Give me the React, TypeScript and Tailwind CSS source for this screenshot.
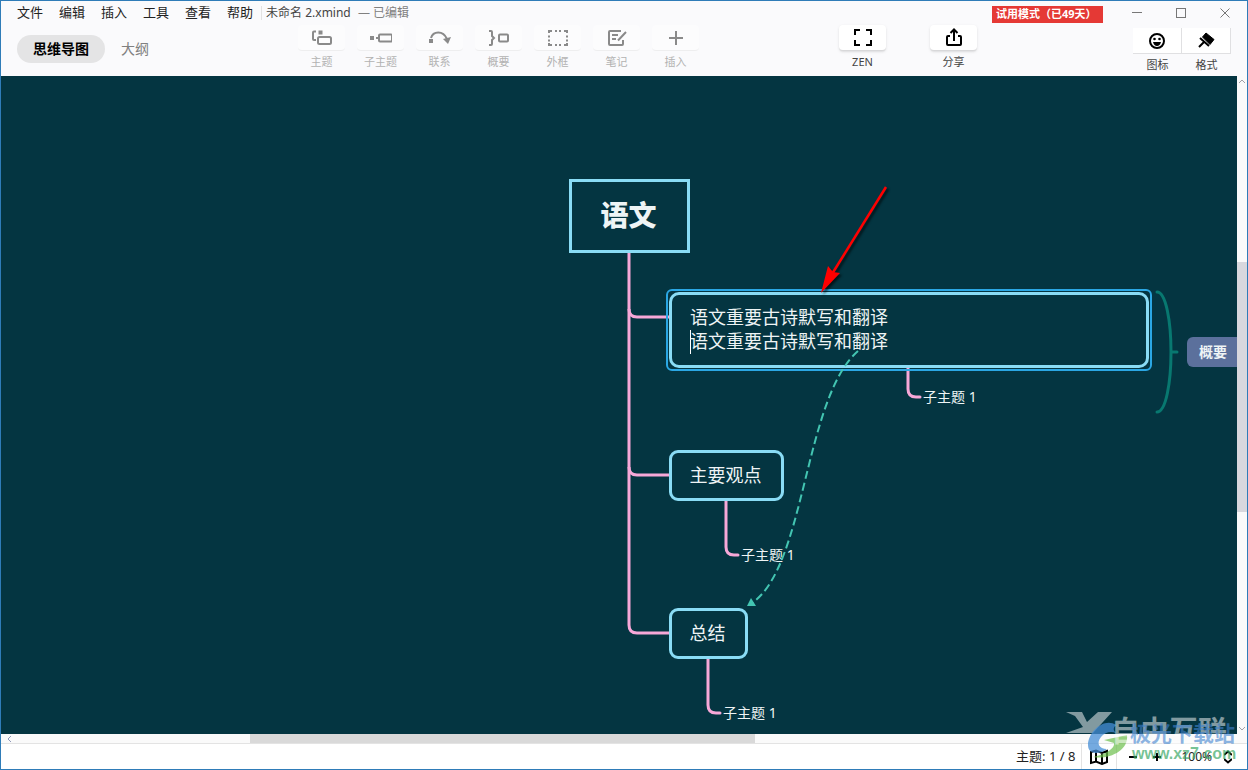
import { useState, type ReactNode } from 'react';

const menus = ['文件', '编辑', '插入', '工具', '查看', '帮助'];

interface Tool {
  label: string;
  icon: ReactNode;
}

const tools: Tool[] = [
  {
    label: '主题',
    icon: (
      <>
        <path d="M5 4.500H3Q2 4.500 2 5.500V12Q2 13 3 13H5" />
        <rect x="7" y="10" width="13" height="7" rx="1.5" />
        <rect x="7.500" y="3.500" width="4" height="4" fill="currentColor" stroke="none" />
      </>
    ),
  },
  {
    label: '子主题',
    icon: (
      <>
        <rect x="0" y="9" width="4" height="4" fill="currentColor" stroke="none" />
        <path d="M6 11H9" />
        <rect x="9" y="7.5" width="13" height="7" rx="1" />
      </>
    ),
  },
  {
    label: '联系',
    icon: (
      <>
        <rect x="0" y="12" width="4" height="4" fill="currentColor" stroke="none" />
        <path d="M2 11C4 4 14 3 18 12" />
        <path d="M14 12L22 10L19 17Z" fill="currentColor" stroke="none" />
      </>
    ),
  },
  {
    label: '概要',
    icon: (
      <>
        <path d="M1 4H3Q4 4 4 5V9L6 11L4 13V17Q4 18 3 18H1" />
        <rect x="11" y="7.5" width="9" height="7" rx="1" />
      </>
    ),
  },
  {
    label: '外框',
    icon: (
      <path d="M2 6V4H5M8 4H10M12 4H14M17 4H20V6M20 8.500V10.500M20 12.500V14.500M20 16V18H17M14 18H12M10 18H8M5 18H2V16M2 14.500V12.500M2 10.500V8.500" />
    ),
  },
  {
    label: '笔记',
    icon: (
      <>
        <path d="M15 4H4Q3 4 3 5V17Q3 18 4 18H16Q17 18 17 17V13" />
        <path d="M6 8H12M6 12H10M20 5L12 13.500" />
      </>
    ),
  },
  { label: '插入', icon: <path d="M11 4V18M4 11H18" /> },
];

function Icon({ children }: { children: ReactNode }) {
  return (
    <svg width="22" height="22" viewBox="0 0 22 22" fill="none" stroke="currentColor" strokeWidth="2" aria-hidden="true">
      {children}
    </svg>
  );
}

function ToolButton({ label, children, dim }: { label: string; children: ReactNode; dim?: boolean }) {
  return (
    <button className={`flex w-[47px] flex-col items-center gap-1 whitespace-nowrap ${dim ? 'text-[#8a8a8a]' : 'text-black'}`}>
      <span
        className={`flex h-[26px] w-full items-center justify-center rounded-sm border-b ${
          dim ? 'border-[#eeeeef] bg-[#fcfcfd]' : 'border-[#d8d8da] bg-white shadow-sm'
        }`}
      >
        {children}
      </span>
      <span className={`text-[11px] leading-[14px] ${dim ? 'text-[#b2b2b2]' : 'text-[#444444]'}`}>{label}</span>
    </button>
  );
}

function SidePanelButton({ label, children }: { label: string; children: ReactNode }) {
  return (
    <button className="flex w-[49px] flex-col items-center gap-1">
      <span className="flex h-[26px] w-full items-center justify-center border-r border-b border-[#e0e0e2] bg-white">
        {children}
      </span>
      <span className="text-[11px] leading-[14px] text-[#444444]">{label}</span>
    </button>
  );
}

function Header() {
  const [tab, setTab] = useState('思维导图');

  return (
    <header className="flex h-[75px] shrink-0 flex-col bg-[#fafafc]">
      <div className="flex h-[23px] items-center">
        <nav className="flex gap-4 pl-4 text-[13px] text-[#222222]">
          {menus.map((m) => (
            <button key={m}>{m}</button>
          ))}
        </nav>
        <div className="ml-2 border-l border-[#e2e2e2] pl-1 text-xs leading-[14px] text-[#444444]">
          未命名 2.xmind <span className="ml-1 text-[#808080]">— 已编辑</span>
        </div>
        <div className="mt-1 mr-3 ml-auto flex h-[17px] w-[111px] items-center bg-[#e53935] text-[11px] font-bold whitespace-nowrap text-white">
          <span className="pl-1">试用模式（已49天）</span>
        </div>
        <div className="flex text-[#777777]">
          <button aria-label="最小化" className="flex w-11 justify-center">
            <svg width="10" height="10" stroke="currentColor"><path d="M0 4.500H10" /></svg>
          </button>
          <button aria-label="最大化" className="flex w-11 justify-center">
            <svg width="10" height="10" fill="none" stroke="currentColor"><rect x=".5" y=".5" width="9" height="9" /></svg>
          </button>
          <button aria-label="关闭" className="flex w-11 justify-center">
            <svg width="10" height="10" stroke="currentColor"><path d="M.5 .5L9.500 9.500M9.500 .5L.5 9.500" /></svg>
          </button>
        </div>
      </div>

      <div className="flex flex-1 items-start">
        <div className="flex w-[297px] pt-[11px] pl-4 text-sm">
          {['思维导图', '大纲'].map((t) => (
            <button
              key={t}
              onClick={() => setTab(t)}
              className={`h-7 rounded-full px-4 ${tab === t ? 'bg-[#e4e4e5] font-bold text-black' : 'text-[#808080]'}`}
            >
              {t}
            </button>
          ))}
        </div>
        <div className="flex gap-3 pt-px">
          {tools.map((t) => (
            <ToolButton key={t.label} label={t.label} dim>
              <Icon>{t.icon}</Icon>
            </ToolButton>
          ))}
        </div>
        <div className="ml-auto flex gap-11 pt-px">
          <ToolButton label="ZEN">
            <Icon><path d="M3 8V3H8M14 3H19V8M19 13V18H14M8 18H3V13" /></Icon>
          </ToolButton>
          <ToolButton label="分享">
            <Icon>
              <path d="M7 9H5Q4 9 4 10V17Q4 18 5 18H17Q18 18 18 17V10Q18 9 17 9H15M11 14V3M7.500 6L11 2.500L14.500 6" />
            </Icon>
          </ToolButton>
        </div>
        <div className="mr-4 ml-[156px] flex rounded-sm pt-1">
          <SidePanelButton label="图标">
            <Icon>
              <circle cx="11" cy="11" r="7" />
              <circle cx="8.500" cy="9" r="1.300" fill="currentColor" stroke="none" />
              <circle cx="13.500" cy="9" r="1.300" fill="currentColor" stroke="none" />
              <path d="M7 12H15Q14 16 11 16Q8 16 7 12Z" fill="currentColor" stroke="none" />
            </Icon>
          </SidePanelButton>
          <SidePanelButton label="格式">
            <Icon>
              <path d="M11 3L19 9.500L15 14.500L7.500 7Z" fill="currentColor" strokeWidth="1" />
              <path d="M5 8L14 16M9 12L4 17" />
            </Icon>
          </SidePanelButton>
        </div>
      </div>
    </header>
  );
}

const subtopics = [
  { id: 'a', place: 'left-[922px] top-[311px]' },
  { id: 'b', place: 'left-[740px] top-[469px]' },
  { id: 'c', place: 'left-[722px] top-[627px]' },
];

function MindMap() {
  return (
    <main className="relative min-w-0 flex-1 overflow-hidden bg-[#043541] text-[#eef4f5]">
      {/* branches */}
      <svg className="absolute top-0 left-0" width="1236" height="658" fill="none" aria-hidden="true">
        <g stroke="#f7a8d8" strokeWidth="3">
          <path d="M628 176V549Q628 557 636 557H668" />
          <path d="M628 233Q628 241 636 241H668" />
          <path d="M628 391Q628 399 636 399H668" />
          <g strokeLinecap="round">
            <path d="M907 292V313Q907 321 915 321H919" />
            <path d="M725 425V471Q725 479 733 479H737" />
            <path d="M707 583V629Q707 637 715 637H719" />
          </g>
        </g>
        <g stroke="#087870" strokeWidth="3" strokeLinecap="round">
          <path d="M1156 216C1165 216 1170 246 1170 276C1170 306 1165 336 1156 336" />
          <path d="M1171 276H1176" />
        </g>
      </svg>

      <div className="absolute top-[103px] left-[568px] flex h-[74px] w-[121px] items-center justify-center border-3 border-[#8adcf5] pr-0.5 pb-0.5 text-[28px] font-black">
        语文
      </div>

      <div className="absolute top-[213px] left-[665px] rounded-md border-2 border-[#2ba7e4] p-px">
        <div className="relative h-[76px] w-[480px] rounded-[10px] border-3 border-[#8adcf5] px-[18px] pt-[10px]">
          <textarea
            aria-label="主题内容"
            defaultValue={'语文重要古诗默写和翻译\n语文重要古诗默写和翻译'}
            className="block h-12 w-full resize-none overflow-hidden bg-transparent text-lg leading-6 outline-none"
          />
          <span className="absolute top-[35px] left-[18px] h-6 w-px bg-white" />
        </div>
      </div>

      <div className="absolute top-[374px] left-[668px] flex h-[51px] w-[115px] items-center justify-center rounded-[9px] border-3 border-[#8adcf5] pr-0.5 pb-0.5 text-lg">
        主要观点
      </div>
      <div className="absolute top-[532px] left-[668px] flex h-[51px] w-[79px] items-center justify-center rounded-[9px] border-3 border-[#8adcf5] pr-0.5 pb-0.5 text-lg">
        总结
      </div>
      {subtopics.map((s) => (
        <div key={s.id} className={`absolute text-sm leading-5 whitespace-nowrap ${s.place}`}>
          子主题 1
        </div>
      ))}
      <div className="absolute top-[261px] left-[1186px] flex h-[30px] w-14 items-center rounded-md bg-[#5b709c] pl-3 text-sm font-bold">
        概要
      </div>

      {/* relationship line and pointer */}
      <svg className="absolute top-0 left-0" width="1236" height="658" fill="none" aria-hidden="true">
        <path d="M857 275C803 322 805 490 751 527" stroke="#43c5b2" strokeWidth="2" strokeDasharray="8 4" />
        <path d="M746 530L750 522L755 530Z" fill="#43c5b2" />
        <g className="drop-shadow-[2px_2px_1px_rgba(0,0,0,0.6)]">
          <path d="M885 111L831 198" stroke="#ff0000" strokeWidth="2.500" />
          <path d="M820 217L827 190L832 196L839 197Z" fill="#ff0000" />
        </g>
      </svg>
    </main>
  );
}

function StatusBar() {
  return (
    <footer className="flex h-[25px] shrink-0 items-center justify-end bg-white text-[13px] text-[#222222]">
      <span className="pr-1.5">主题: 1 / 8</span>
      <button aria-label="导航图" className="flex h-full w-9 items-center justify-center border-x border-[#e3e3e3] text-black">
        <svg width="18" height="16" viewBox="0 0 18 16" fill="none" stroke="currentColor" strokeWidth="2" aria-hidden="true">
          <path d="M1 3L6 1.500L12 4L17 2V13L12 15L6 12.500L1 14ZM6 2V13M12 4V15" />
        </svg>
      </button>
      <button aria-label="缩小" className="ml-1 flex w-6 justify-center">
        <svg width="10" height="10" stroke="#000000" strokeWidth="2"><path d="M1 5H9" /></svg>
      </button>
      <button aria-label="放大" className="flex w-6 justify-center">
        <svg width="10" height="10" stroke="#000000" strokeWidth="2"><path d="M1 5H9M5 1V9" /></svg>
      </button>
      <button className="mr-[15px] ml-3 flex items-center gap-3 text-xs">
        100%
        <svg width="8" height="14" fill="none" stroke="#000000" strokeWidth="2"><path d="M0 5L4 1.500L8 5M0 9L4 12.500L8 9" /></svg>
      </button>
    </footer>
  );
}

function Watermark() {
  return (
    <div className="pointer-events-none absolute right-0 bottom-0 h-[60px] w-[184px] overflow-hidden whitespace-nowrap">
      <svg className="absolute top-0 left-0" width="90" height="60" fill="none" aria-hidden="true">
        <path d="M3 3H19L24 13L35 3H49L30 24H3L20 18L12 7Z" fill="#ffffff" fillOpacity=".5" />
        <path d="M53 16C42 8 25 22 25 36C25 46 37 46 44 40C36 40 33 34 38 28C42 23 48 22 53 24C48 20 53 16 53 16Z" fill="#468dd5" fillOpacity=".75" />
        <path d="M41 31L64 26C66 42 45 51 30 48C44 45 52 39 51 34Z" fill="#6cbf4b" fillOpacity=".7" />
      </svg>
      <div className="absolute top-1.5 left-12 text-[29px] leading-8 font-bold text-white/50">自由互联</div>
      <div className="absolute top-3 left-[67px] text-[21px] leading-6 font-bold text-[#3f82cf]/60">极光下载站</div>
      <div className="absolute top-[35px] left-[69px] font-['Liberation_Sans'] text-base leading-5 font-bold text-[#3aa865]/70">www.xz7.com</div>
    </div>
  );
}

export default function App() {
  return (
    <div className="relative flex h-screen flex-col overflow-hidden border border-[#2f7cb8] font-['Noto_Sans','Noto_Sans_CJK_SC',sans-serif]">
      <Header />
      <div className="flex min-h-0 flex-1">
        <MindMap />
        <div className="flex w-[10px] shrink-0 flex-col items-center bg-[#fafafa] text-[#a0a0a8]">
          <div className="flex-[186]">
            <svg className="mt-[3px]" width="6" height="4" fill="none" stroke="currentColor"><path d="M0 4L3 1L6 4" /></svg>
          </div>
          <div className="w-full flex-[250] bg-[#d8d8de]" />
          <div className="flex flex-[222] items-end">
            <svg className="mb-[3px]" width="6" height="4" fill="none" stroke="currentColor"><path d="M0 0L3 3L6 0" /></svg>
          </div>
        </div>
      </div>
      <div className="flex h-[10px] shrink-0 border-b border-[#e3e3e3] bg-[#fafafa] pr-[10px] text-[#9098b8]">
        <div className="flex flex-[249] items-center">
          <svg className="ml-[6px]" width="4" height="6" fill="none" stroke="currentColor"><path d="M4 0L1 3L4 6" /></svg>
        </div>
        <div className="flex-[505] bg-[#d9d9d9]" />
        <div className="flex-[482]" />
      </div>
      <StatusBar />
      <Watermark />
    </div>
  );
}
